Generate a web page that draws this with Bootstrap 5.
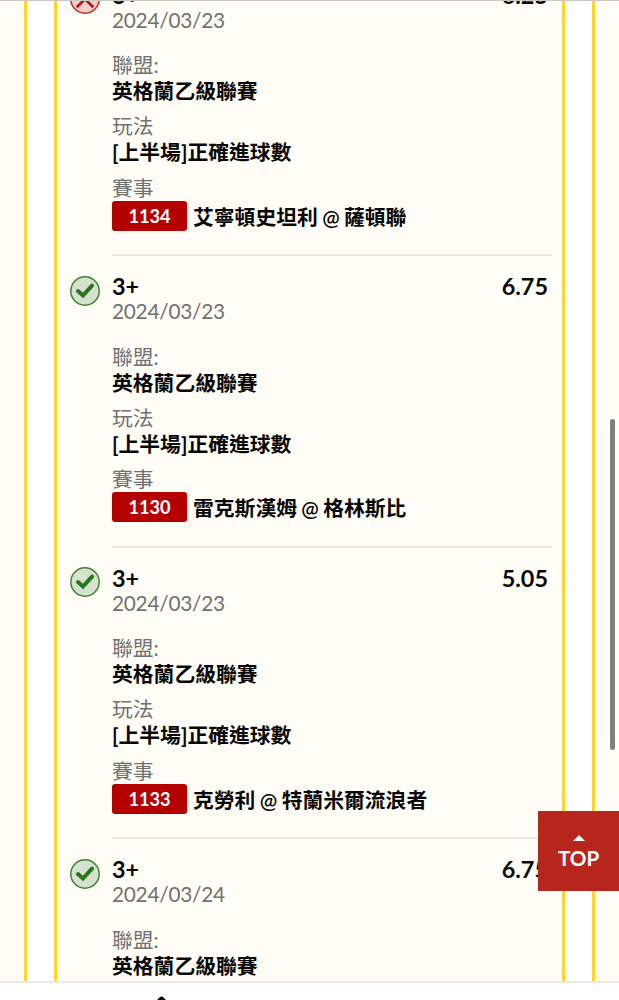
<!DOCTYPE html>
<html lang="zh-Hant">
<head>
<meta charset="utf-8">
<meta name="viewport" content="width=device-width, initial-scale=1">
<title>投注紀錄</title>
<link href="https://cdn.jsdelivr.net/npm/bootstrap@5.3.0/dist/css/bootstrap.min.css" rel="stylesheet">
<style>
body{font-family:Lato,"Noto Sans CJK TC",sans-serif;background:#fffdf5;color:#080808;font-size:20.8px;height:1000px}
.viewport{height:981px}
.outer{margin:0 24px;border:solid #ffd52b;border-width:0 3px;background:#fff;padding:0 27px}
.slip{border:solid #ffd52b;border-width:0 3px;background:#fffdf5;margin-top:-35.2px;padding:0 10px 0 13px}
.leg{height:291.5px;gap:12px}
.leg-body{padding-top:16.7px;border-bottom:2px solid #e9e8e1}
.state{width:30px;height:30px;margin-top:19.2px}
.pick{font-size:23.4px;line-height:26px;font-weight:700;padding-right:4px}
.date{font-size:20.8px;line-height:24px;letter-spacing:-.25px;color:#717171;margin-bottom:20.8px}
.lbl{line-height:25px;color:#717171}
.val{line-height:27px;font-weight:700;margin-bottom:9.2px;white-space:nowrap}
.match{font-weight:700;line-height:31px;gap:6px;margin-top:1px;white-space:nowrap}
.at{font-weight:600;word-spacing:-.8px}
.code{width:75px;height:30px;line-height:30px;background:#b50000;color:#fff;border-radius:3px;font-size:18.2px}
.topbtn{right:0;top:811px;width:81px;height:80px;background:#b7261c;color:#fff;font-size:20.6px;line-height:26px;font-weight:700;padding-top:24px}
.thumb{left:610px;top:419px;width:5px;height:331px;background:#80807c}
.topline{height:1px;background:#c9c8c3}
.dock{height:19px;border-top:2px solid #e9e9e8;background:#fff;padding-left:155px}
</style>
<script src="https://cdn.jsdelivr.net/npm/bootstrap@5.3.0/dist/js/bootstrap.bundle.min.js"></script>
</head>
<body class="overflow-hidden position-relative">
<svg class="d-none"><symbol id="win" viewBox="0 0 30 30"><circle cx="15" cy="15" r="14.2" fill="#d5e2cd" stroke="#3c8433" stroke-width="1.5"/><path d="M8 15.1 13 19.5 22 9.6" fill="none" stroke="#28751e" stroke-width="4" stroke-linecap="round" stroke-linejoin="miter"/></symbol>
<symbol id="lose" viewBox="0 0 30 30"><circle cx="15" cy="15" r="14.2" fill="#f0d0ca" stroke="#c52528" stroke-width="1.5"/><path d="M6.7 6.7 23.3 23.3M23.3 6.7 6.7 23.3" fill="none" stroke="#bd1116" stroke-width="2.7"/></symbol></svg>
<main class="viewport overflow-hidden">
<div class="outer"><div class="slip">
<div class="leg d-flex"><svg class="state flex-shrink-0"><use href="#lose"/></svg><div class="leg-body flex-grow-1"><div class="pick d-flex justify-content-between"><span>3+</span><span>6.25</span></div><div class="date">2024/03/23</div><div class="lbl">聯盟:</div><div class="val">英格蘭乙級聯賽</div><div class="lbl">玩法</div><div class="val">[上半場]正確進球數</div><div class="lbl">賽事</div><div class="match d-flex"><span class="code text-center">1134</span><span>艾寧頓史坦利<span class="at"> @ </span>薩頓聯</span></div></div></div>
<div class="leg d-flex"><svg class="state flex-shrink-0"><use href="#win"/></svg><div class="leg-body flex-grow-1"><div class="pick d-flex justify-content-between"><span>3+</span><span>6.75</span></div><div class="date">2024/03/23</div><div class="lbl">聯盟:</div><div class="val">英格蘭乙級聯賽</div><div class="lbl">玩法</div><div class="val">[上半場]正確進球數</div><div class="lbl">賽事</div><div class="match d-flex"><span class="code text-center">1130</span><span>雷克斯漢姆<span class="at"> @ </span>格林斯比</span></div></div></div>
<div class="leg d-flex"><svg class="state flex-shrink-0"><use href="#win"/></svg><div class="leg-body flex-grow-1"><div class="pick d-flex justify-content-between"><span>3+</span><span>5.05</span></div><div class="date">2024/03/23</div><div class="lbl">聯盟:</div><div class="val">英格蘭乙級聯賽</div><div class="lbl">玩法</div><div class="val">[上半場]正確進球數</div><div class="lbl">賽事</div><div class="match d-flex"><span class="code text-center">1133</span><span>克勞利<span class="at"> @ </span>特蘭米爾流浪者</span></div></div></div>
<div class="leg d-flex"><svg class="state flex-shrink-0"><use href="#win"/></svg><div class="leg-body flex-grow-1"><div class="pick d-flex justify-content-between"><span>3+</span><span>6.75</span></div><div class="date">2024/03/24</div><div class="lbl">聯盟:</div><div class="val">英格蘭乙級聯賽</div></div></div>
</div></div>
</main>
<footer class="dock overflow-hidden"><svg class="d-block" width="13" height="19"><path d="M1 18 4.5 14.5Q6.5 12.5 8.5 14.5L12 18V19H1Z" fill="#080808"/></svg></footer>
<div class="topline position-absolute top-0 start-0 w-100"></div>
<div class="thumb position-absolute rounded-pill"></div>
<a class="topbtn position-absolute d-flex flex-column align-items-center text-decoration-none" href="#"><svg width="12" height="6" class="flex-shrink-0 mb-1"><path d="M0 6 6 0 12 6Z" fill="#fff"/></svg><span>TOP</span></a>
</body>
</html>
